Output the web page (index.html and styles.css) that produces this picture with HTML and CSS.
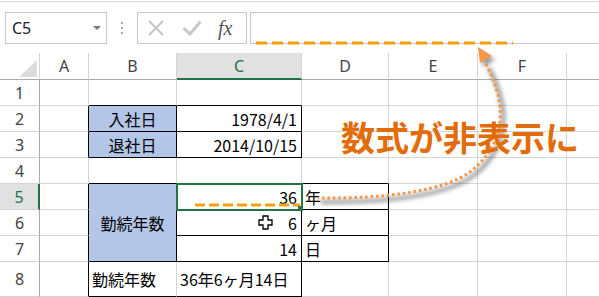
FILE: index.html
```html
<!DOCTYPE html>
<html lang="ja">
<head>
  <meta charset="UTF-8" />
  <title>勤続年数 - Excel</title>
  <link rel="stylesheet" href="styles.css">
</head>
<body>
  <div class="sheet-app">
    <div class="formula-bar">
      <div class="name-box"><span>C5</span><span class="caret"></span></div>
      <div class="grip"><i></i><i></i><i></i></div>
      <div class="fx-buttons">
        <svg class="icon-x" width="18" height="16" viewBox="0 0 18 16">
          <path d="M2 1 L16 15 M16 1 L2 15" stroke="#c3c3c3" stroke-width="2" fill="none"/>
        </svg>
        <svg class="icon-check" width="20" height="16" viewBox="0 0 20 16">
          <path d="M1.5 8 L8 14 L18.5 1.5" stroke="#c8c8c8" stroke-width="3" fill="none"/>
        </svg>
        <span class="fx">fx</span>
      </div>
      <div class="formula-input"></div>
    </div>

    <div class="grid">
      <!-- header -->
      <div class="corner"></div>
      <div class="col-head">A</div>
      <div class="col-head">B</div>
      <div class="col-head active">C</div>
      <div class="col-head">D</div>
      <div class="col-head">E</div>
      <div class="col-head">F</div>
      <div class="col-head"></div>

      <!-- row 1 -->
      <div class="row-head">1</div>
      <div></div>
      <div class="kb"></div>
      <div class="kb"></div>
      <div></div><div></div><div></div><div></div>

      <!-- row 2 -->
      <div class="row-head">2</div>
      <div class="kr"></div>
      <div class="label kr kb">入社日</div>
      <div class="num kr kb">1978/4/1</div>
      <div></div><div></div><div></div><div></div>

      <!-- row 3 -->
      <div class="row-head">3</div>
      <div class="kr"></div>
      <div class="label kr kb">退社日</div>
      <div class="num kr kb">2014/10/15</div>
      <div></div><div></div><div></div><div></div>

      <!-- row 4 -->
      <div class="row-head">4</div>
      <div></div>
      <div class="kb"></div>
      <div class="kb"></div>
      <div class="kb"></div>
      <div></div><div></div><div></div>

      <!-- row 5 -->
      <div class="row-head active">5</div>
      <div class="kr"></div>
      <div class="label merged kr kb">勤続年数</div>
      <div class="num kr kb selected">36</div>
      <div class="kr kb">年</div>
      <div></div><div></div><div></div>

      <!-- row 6 -->
      <div class="row-head">6</div>
      <div class="kr"></div>
      <div class="num kr kb">6</div>
      <div class="kr kb">ヶ月</div>
      <div></div><div></div><div></div>

      <!-- row 7 -->
      <div class="row-head">7</div>
      <div class="kr"></div>
      <div class="num kr kb">14</div>
      <div class="kr kb">日</div>
      <div></div><div></div><div></div>

      <!-- row 8 -->
      <div class="row-head">8</div>
      <div class="kr"></div>
      <div class="kb">勤続年数</div>
      <div class="kr kb">36年6ヶ月14日</div>
      <div></div><div></div><div></div><div></div>
    </div>

    <svg class="annotation" width="599" height="297" viewBox="0 0 599 297">
      <defs>
        <filter id="blur" x="-30%" y="-30%" width="160%" height="160%">
          <feGaussianBlur stdDeviation="2.2"/>
        </filter>
      </defs>
      <line x1="256" y1="43" x2="513" y2="43" stroke="#f7a10a" stroke-width="3" stroke-dasharray="11 5"/>
      <!-- soft shadow under the arrow -->
      <g transform="translate(3 4)" filter="url(#blur)" opacity="0.4">
        <path d="M486 64 C505 100 510 140 470 172 C445 190 390 199 318 198" fill="none" stroke="#000" stroke-width="4"/>
        <polygon points="478,47 492,56 480,63" fill="#000"/>
      </g>
      <path d="M486 64 C505 100 510 140 470 172 C445 190 390 199 318 198" fill="none" stroke="#f79646" stroke-width="3" stroke-dasharray="2.6 2.8"/>
      <polygon points="478,47 492,56 480,63" fill="#f79646"/>
      <line x1="195" y1="205" x2="300" y2="205" stroke="#f7a10a" stroke-width="3" stroke-dasharray="10 4"/>
      <rect x="298" y="206" width="5" height="5" fill="#217346"/>
      <polygon points="263,216 268,216 268,220 272,220 272,225 268,225 268,229 263,229 263,225 259,225 259,220 263,220" fill="#fff" stroke="#000" stroke-width="1.3"/>
    </svg>

    <div class="callout">数式が非表示に</div>
  </div>
</body>
</html>
```

FILE: styles.css
```css
body {
  margin: 0;
  background-color: #fff;
}
.sheet-app {
  position: relative;
  width: 599px;
  height: 297px;
  overflow: hidden;
  background-color: #fff;
  font-family: "Noto Sans CJK JP", sans-serif;
}

/* formula bar */
.formula-bar {
  display: flex;
  height: 32px;
  margin-top: 1px;
  padding: 10px 0 9px 5px;
  border-top: 1px solid #d4d4d4;
}
.name-box {
  display: flex;
  align-items: center;
  box-sizing: border-box;
  width: 102px;
  padding-left: 6px;
  border: 1px solid #c6c6c6;
  font-family: "Noto Sans", sans-serif;
  font-size: 16px;
  color: #222;
}
.caret {
  margin-left: auto;
  margin-right: 5px;
  border-left: 4px solid transparent;
  border-right: 4px solid transparent;
  border-top: 4px solid #777;
}
.grip {
  display: flex;
  flex-direction: column;
  align-items: center;
  justify-content: center;
  gap: 3px;
  width: 30px;
}
.grip i {
  width: 2px;
  height: 2px;
  background-color: #a6a6a6;
}
.fx-buttons {
  display: flex;
  align-items: center;
  box-sizing: border-box;
  width: 110px;
  border: 1px solid #c6c6c6;
}
.icon-x {
  margin-left: 9px;
}
.icon-check {
  margin-left: 17px;
}
.fx {
  margin-left: 16px;
  font-family: "Liberation Serif", serif;
  font-style: italic;
  font-size: 20px;
  color: #555;
}
.formula-input {
  flex: 1;
  margin-left: 3px;
  border: 1px solid #c6c6c6;
  border-right: none;
}

/* sheet grid */
.grid {
  display: grid;
  grid-template-columns: 40px 49px 88px 125px 87px 89px 89px 89px;
  grid-template-rows: 27px repeat(7, 26px) 35px;
  font-size: 16px;
  color: #000;
}
.grid > div {
  display: flex;
  align-items: center;
  box-sizing: border-box;
  padding: 0 3px;
  border-right: 1px solid #d4d4d4;
  border-bottom: 1px solid #d4d4d4;
  white-space: nowrap;
  overflow: hidden;
}
.grid > .corner {
  position: relative;
  border-bottom-color: #ababab;
  border-right-color: #d4d4d4;
}
.corner::after {
  content: "";
  position: absolute;
  right: 2px;
  bottom: 2px;
  border-left: 18px solid transparent;
  border-bottom: 17px solid #dcdcdc;
}
.grid > .col-head {
  justify-content: center;
  border-bottom-color: #ababab;
  font-family: "Noto Sans", sans-serif;
  color: #444;
}
.grid > .col-head.active {
  background-color: #e1e1e1;
  color: #217346;
  border-bottom: 2px solid #217346;
}
.grid > .row-head {
  justify-content: center;
  border-right-color: #ababab;
  font-family: "Noto Sans", sans-serif;
  color: #444;
}
.grid > .row-head.active {
  background-color: #e1e1e1;
  color: #217346;
  border-right: 2px solid #217346;
}
.grid > .kr {
  border-right-color: #000;
}
.grid > .kb {
  border-bottom-color: #000;
}
.grid > .label {
  justify-content: center;
  background-color: #b4c6e7;
}
.grid > .merged {
  grid-row: span 3;
}
.grid > .num {
  justify-content: flex-end;
  padding-right: 4px;
}
.grid > .selected {
  position: relative;
  z-index: 1;
  outline: 2px solid #217346;
  outline-offset: -1px;
}

/* annotations */
.annotation {
  position: absolute;
  left: 0;
  top: 0;
  z-index: 2;
  pointer-events: none;
}
.callout {
  position: absolute;
  left: 341px;
  top: 120px;
  z-index: 3;
  font-size: 34px;
  font-weight: 700;
  line-height: 1;
  color: #e36c0a;
  white-space: nowrap;
}
```
